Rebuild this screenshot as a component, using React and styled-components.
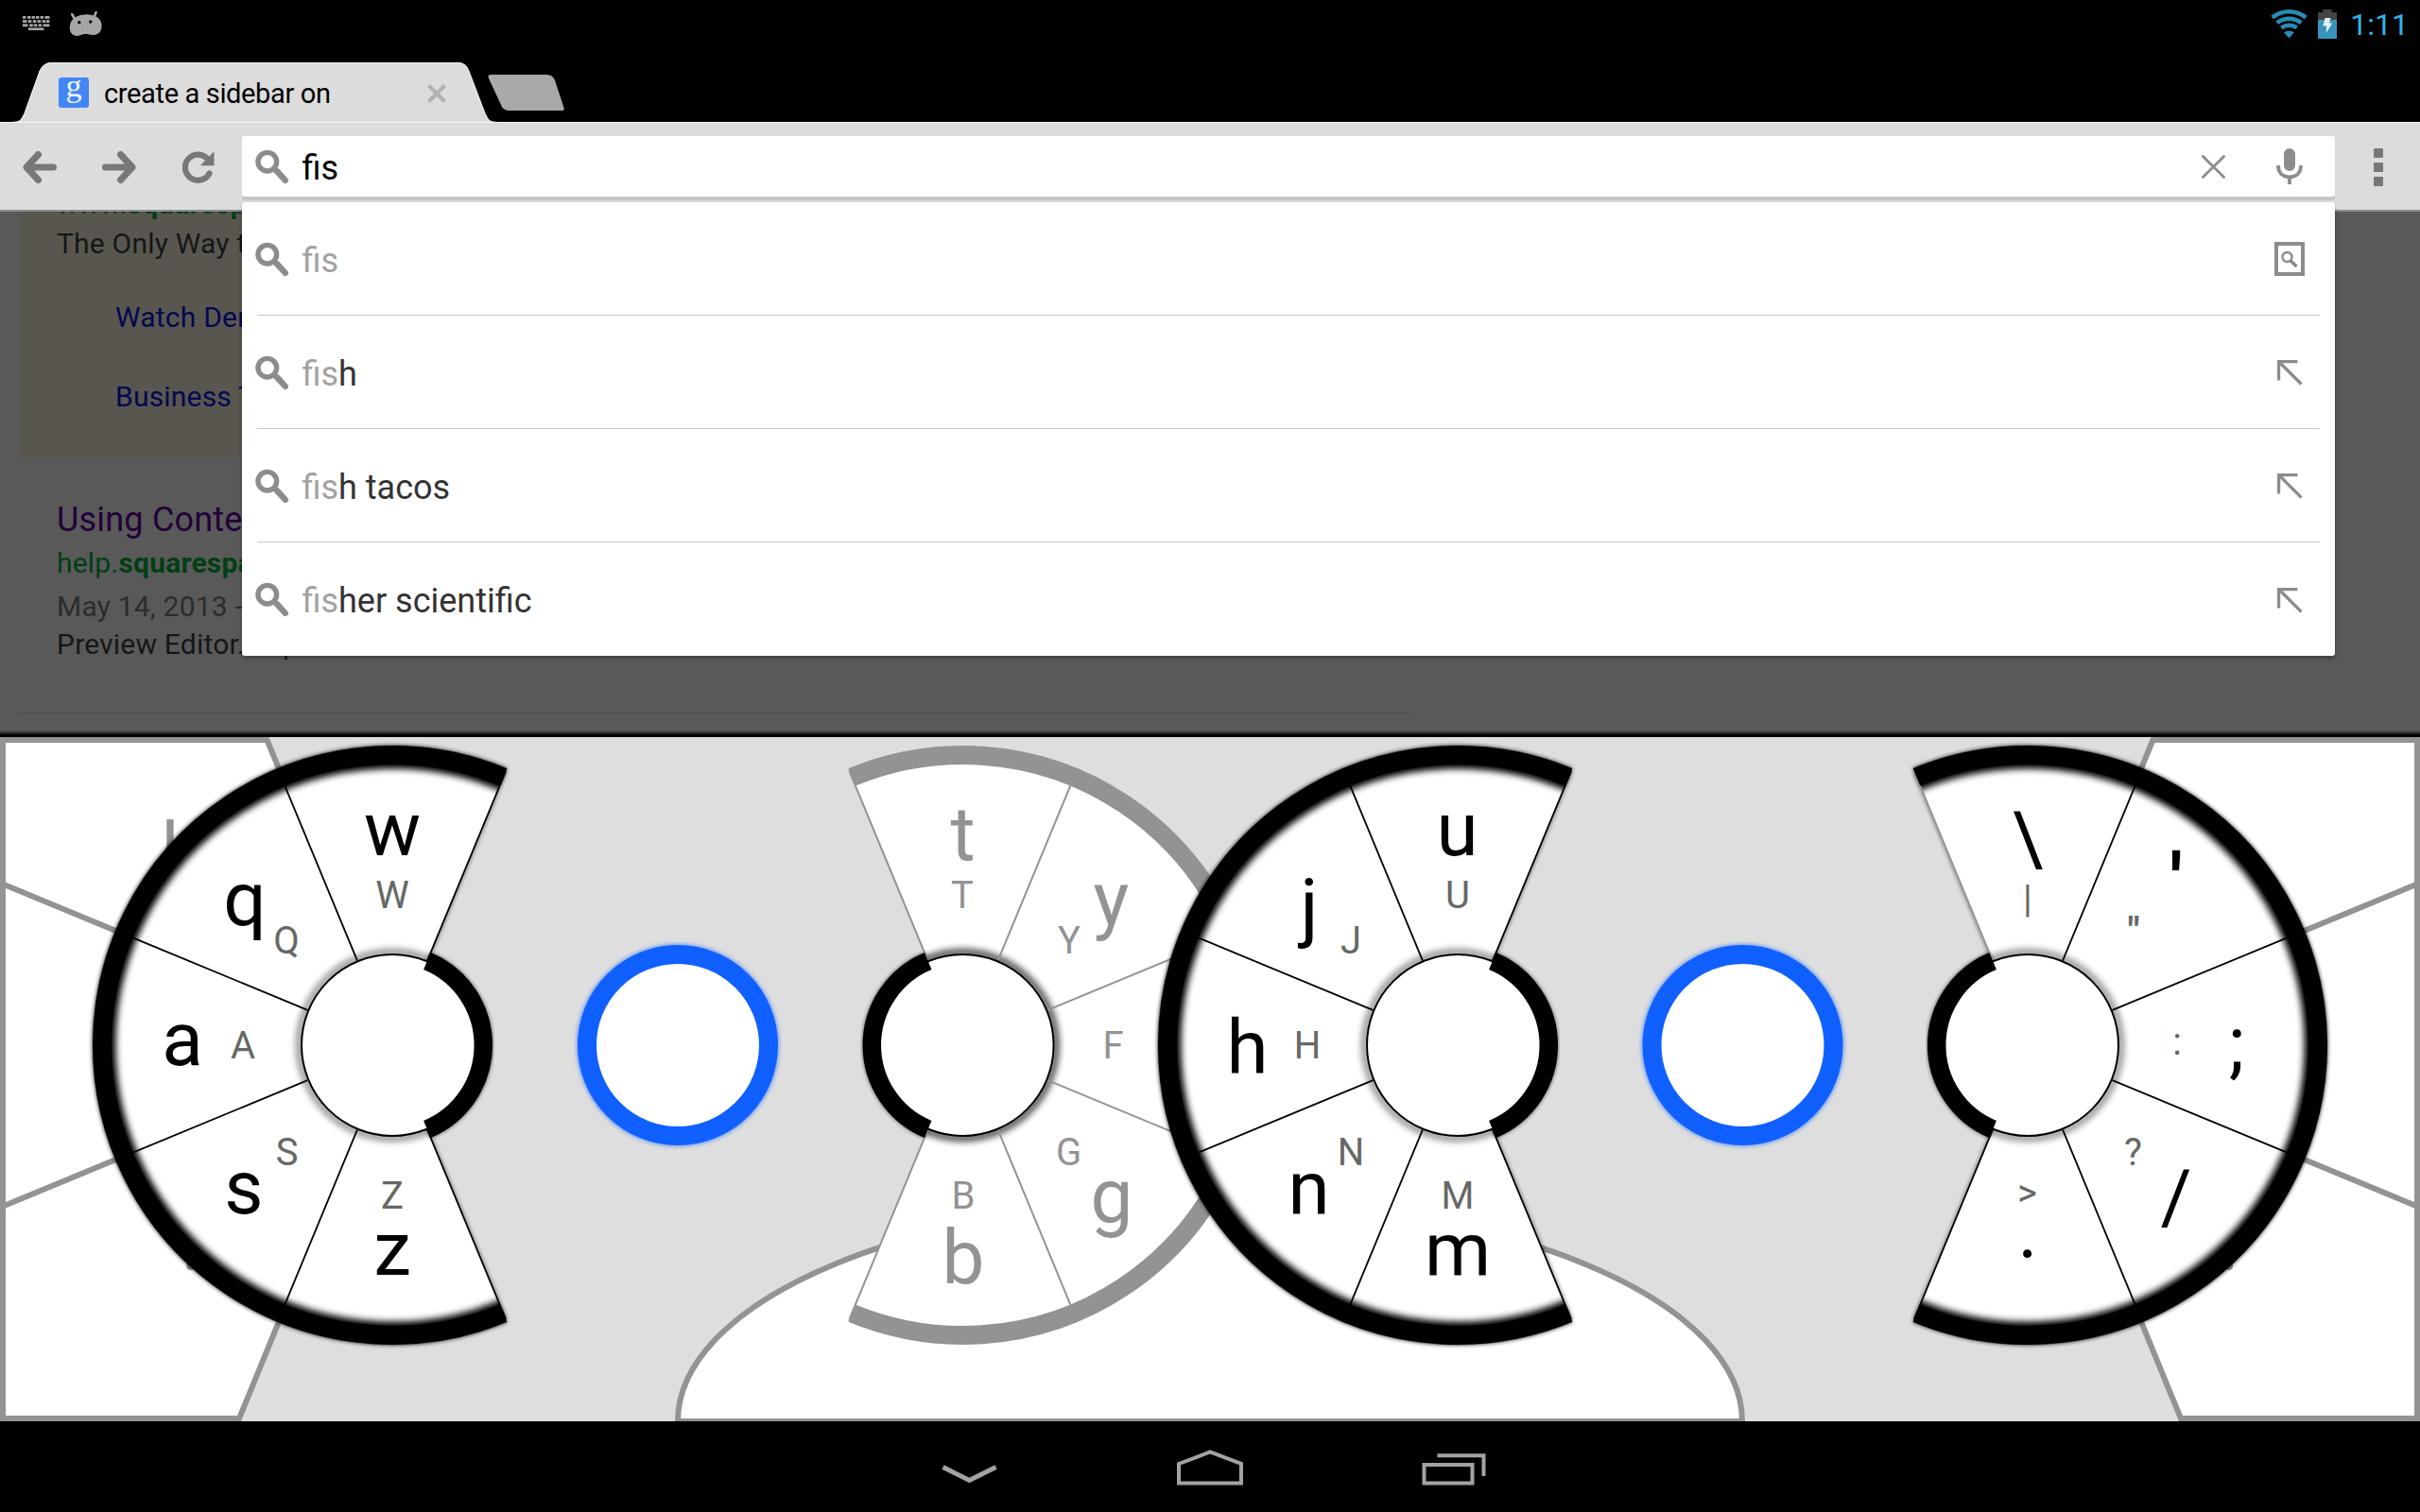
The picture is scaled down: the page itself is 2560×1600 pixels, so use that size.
import React from "react";
import styled, { createGlobalStyle } from "styled-components";

const GlobalStyle = createGlobalStyle`
  html, body { margin: 0; padding: 0; background: #000; }
  * { box-sizing: border-box; }
  body { font-family: Roboto, "Liberation Sans", sans-serif; overflow: hidden; }
  svg { display: block; flex: none; overflow: visible; }
`;

const Screen = styled.div`
  width: 2560px;
  height: 1600px;
  display: flex;
  flex-direction: column;
  background: #000;
  overflow: hidden;
`;

const StatusBar = styled.header`
  height: 50px;
  flex: none;
  display: flex;
  justify-content: space-between;
  align-items: center;
  padding: 0 12px 0 24px;
`;

const StatusGroup = styled.div`
  display: flex;
  align-items: center;
  gap: ${(p) => p.$gap}px;
`;

const Clock = styled.span`
  font-size: 32px;
  line-height: 50px;
  color: #33b5e5;
  padding: 2px 0 0 3px;
`;

const TabStrip = styled.div`
  height: 79px;
  flex: none;
  display: flex;
  align-items: flex-end;
  padding-left: 18px;
`;

const Tab = styled.div`
  width: 506px;
  height: 63px;
  display: flex;
  align-items: center;
  padding: 0 52px 3px 44px;
  position: relative;
`;

const TabShape = styled.svg`
  position: absolute;
  left: 0;
  top: 0;
`;

const Favicon = styled.span`
  position: relative;
  width: 32px;
  height: 32px;
  margin-top: 4px;
  border-radius: 3px;
  background: #4285f4;
  color: #f2f6ff;
  font: 34px/17px "Liberation Serif", serif;
  text-align: center;
`;

const TabTitle = styled.span`
  position: relative;
  flex: 1;
  margin-left: 16px;
  font-size: 29px;
  letter-spacing: -0.35px;
  line-height: 40px;
  padding-top: 5px;
  color: #000;
  white-space: nowrap;
`;

const TabClose = styled.svg`
  position: relative;
  top: 3px;
`;

const Toolbar = styled.div`
  position: relative;
  z-index: 2;
  height: 95px;
  flex: none;
  display: flex;
  align-items: center;
  background: #dcdcdc;
  border-top: 1px solid #f4f4f4;
  border-bottom: 2px solid #8c8c8c;
`;

const NavButtons = styled.div`
  width: 256px;
  display: flex;
  align-items: center;
  padding: 2px 0 0 24px;
  gap: 48px;
`;

const OmniWrap = styled.div`
  position: relative;
  width: 2214px;
  height: 64px;
`;

const Omnibox = styled.div`
  height: 64px;
  display: flex;
  align-items: center;
  background: #fff;
  border-radius: 3px;
  box-shadow: 0 4px 1px #c6c6c6;
  padding: 0 34px 0 14px;
`;

const Query = styled.span`
  flex: 1;
  margin-left: 13.5px;
  padding-top: 4px;
  font-size: 36px;
  line-height: 42px;
  color: #000;
`;

const BoxActions = styled.div`
  display: flex;
  align-items: center;
  gap: 54px;
`;

const Suggestions = styled.ul`
  position: absolute;
  left: 0;
  top: 70px;
  width: 2214px;
  margin: 0;
  padding: 0 16px;
  list-style: none;
  background: #fff;
  border-radius: 3px;
  box-shadow: 0 3px 4px rgba(0, 0, 0, 0.25);
`;

const Suggestion = styled.li`
  height: 120px;
  display: flex;
  align-items: center;
  border-bottom: ${(p) => (p.$last ? "none" : "1px solid #c8c8c8")};
  padding-right: ${(p) => (p.$page ? 16 : 18)}px;
`;

const RowIcon = styled.span`
  margin-left: -2px;
`;

const FillSlot = styled.span`
  padding-top: 2px;
`;

const SuggestionText = styled.span`
  flex: 1;
  margin-left: 13.5px;
  padding-top: 4px;
  font-size: 36px;
  line-height: 42px;
  color: #333;
`;

const Typed = styled.span`
  color: #a2a2a2;
`;

const MenuDots = styled.div`
  flex: 1;
  display: flex;
  flex-direction: column;
  align-items: center;
  gap: 5px;
  padding: 2px 0 0 2px;
`;

const Dot = styled.i`
  width: 10px;
  height: 10px;
  border-radius: 1px;
  background: #777;
`;

const Page = styled.main`
  height: 556px;
  flex: none;
  background: linear-gradient(to bottom, #595959 549px, #000 554px);
  overflow: hidden;
  padding-left: 20px;
`;

const AdBlock = styled.section`
  width: 1473px;
  height: 261px;
  background: #59564f;
  padding-left: 40px;
  display: flow-root;
`;

const Result = styled.section`
  width: 1473px;
  height: 268px;
  padding: 43px 0 0 40px;
`;

const Rule = styled.div`
  width: 1473px;
  height: 2px;
  background: #515151;
`;

const Line = styled.div`
  height: ${(p) => p.$h || 40}px;
  line-height: ${(p) => p.$h || 40}px;
  margin-top: ${(p) => p.$mt || 0}px;
  margin-left: ${(p) => p.$ml || 0}px;
  font-size: ${(p) => p.$size || 30}px;
  letter-spacing: 0.2px;
  color: ${(p) => p.$color};
  white-space: nowrap;
`;

const Keyboard = styled.section`
  height: 724px;
  flex: none;
  background: #dedede;
  overflow: hidden;
`;

const KeyText = styled.text`
  font-family: Roboto, "Liberation Sans", sans-serif;
  font-size: ${(p) => p.$size}px;
  font-weight: ${(p) => (p.$heavy ? 700 : 400)};
  text-anchor: middle;
  fill: ${(p) => p.$color};
`;

const NavBar = styled.nav`
  height: 96px;
  flex: none;
  display: flex;
  align-items: center;
  justify-content: center;
  gap: 190px;
`;

const NavSlot = styled.div`
  width: 70px;
  height: 96px;
  display: flex;
  justify-content: ${(p) => (p.$end ? "flex-end" : "center")};
  align-items: flex-start;
`;

function SearchIcon() {
  return (
    <svg width="36" height="36" viewBox="0 0 36 36" fill="none" stroke="#8c8c8c">
      <circle cx="12.8" cy="13.2" r="9.8" strokeWidth="5.4" />
      <path d="M20 21.5L25 26" strokeWidth="5" />
      <path d="M23.3 23.5L31.8 32.8" strokeWidth="6.4" strokeLinecap="round" />
    </svg>
  );
}

function ArrowIcon({ flip }) {
  return (
    <svg width="36" height="36" viewBox="0 0 36 36" fill="none" stroke="#787878" strokeWidth="7" strokeLinecap="round" strokeLinejoin="round">
      <g transform={flip ? "translate(36 0) scale(-1 1)" : undefined}>
        <path d="M16.5 4.5L4 18L16.5 31.5M5 18H32.5" />
      </g>
    </svg>
  );
}

function ReloadIcon() {
  return (
    <svg width="36" height="36" viewBox="0 0 36 36">
      <path d="M27 8.5A13.6 13.6 0 1 0 29.5 24.5" fill="none" stroke="#787878" strokeWidth="6.2" strokeLinecap="round" />
      <path d="M34.5 1.2V16.2H19.8Z" fill="#787878" />
    </svg>
  );
}

function FillArrow() {
  return (
    <svg width="27" height="27" viewBox="0 0 27 27" fill="none" stroke="#8c8c8c" strokeWidth="3.2">
      <path d="M1.6 21.5V1.6H21.5M2 2L25.5 25.5" />
    </svg>
  );
}

function PageSearchIcon() {
  return (
    <svg width="32" height="36" viewBox="0 0 32 36" fill="none" stroke="#8c8c8c">
      <rect x="2" y="2" width="28" height="32" strokeWidth="4" />
      <circle cx="13.5" cy="16" r="5" strokeWidth="2.4" />
      <path d="M17.2 20L23.5 26" strokeWidth="3.6" />
    </svg>
  );
}

function KeyboardIcon() {
  const rows = [
    [0, [0, 5, 9.6, 14, 18.6, 23.4], 3.4],
    [4.2, [0, 5.8, 10.8, 15.6, 20.6, 25], 3.6],
    [8.4, [0, 7.2, 11.8, 16.6, 21.6], 3.6],
  ];
  return (
    <svg width="29" height="16" viewBox="0 0 29 16" fill="#a6a6a6">
      {rows.map(([y, xs, w], r) =>
        xs.map((x, i) => (
          <rect key={`${r}-${x}`} x={x} y={y} width={i === xs.length - 1 ? 28.4 - x : i === 0 && r ? w + r * 0.9 : w} height="2.8" />
        ))
      )}
      <rect x="6" y="12.4" width="16.4" height="2.6" />
    </svg>
  );
}

function DroidIcon() {
  return (
    <svg width="35" height="27" viewBox="0 0 35 27">
      <path d="M3.2 3L6 8M28.6 1L26.6 6" stroke="#a6a6a6" strokeWidth="2.6" strokeLinecap="round" />
      <path d="M1 15C2 7 9 3.6 17 3.4C26 3 33 6.5 34.4 13C35.4 19.5 32 25 26 25C22.5 25 20 23.6 17 24C13.5 24.2 10.5 26.5 6.8 25.8C2 25 0.2 20 1 15Z" fill="#a6a6a6" />
      <circle cx="10.8" cy="11.7" r="1.7" />
      <circle cx="22.8" cy="11" r="1.7" />
      <path d="M14.6 17h1v1h-1zM19 17h1v1h-1zM14.6 20h1v1h-1zM19 20h1v1h-1z" fill="#8a8a8a" />
    </svg>
  );
}

function WifiIcon() {
  return (
    <svg width="39" height="31" viewBox="0 0 39 31">
      <g fill="none" stroke="#268cb5" strokeWidth="4.6">
        <path d="M1.7 8.6A28 28 0 0 1 37.3 8.6" />
        <path d="M6.8 14.2A20.5 20.5 0 0 1 32.2 14.2" />
        <path d="M11.4 19.4A13.5 13.5 0 0 1 27.6 19.4" />
      </g>
      <path d="M14 24.2Q19.5 20.6 25 24.2L19.5 30.4Z" fill="#268cb5" />
    </svg>
  );
}

function BatteryIcon() {
  return (
    <svg width="20" height="31" viewBox="0 0 20 31">
      <path d="M0 3H5.4V0H14.6V3H20V11H0Z" fill="#444" />
      <path d="M0 11H20V31H0Z" fill="#3893b8" />
      <path d="M7.5 9H13.6L12 14.4H15.4L8.6 25L9.2 17.4H5.4Z" fill="#e4eef2" />
    </svg>
  );
}

const CY = 326;
const rad = (deg) => (deg * Math.PI) / 180;
const pt = (cx, r, deg) => `${(cx + r * Math.cos(rad(deg))).toFixed(2)} ${(CY + r * Math.sin(rad(deg))).toFixed(2)}`;
const arc = (cx, r, from, to) =>
  `M${pt(cx, r, from)}A${r} ${r} 0 ${Math.abs(to - from) > 180 ? 1 : 0} 1 ${pt(cx, r, to)}`;

const GREY = "#949294";

/* A fan of five keys round a hub; the open side faces right when side is "left". */
function Dial({ cx, side, muted, faintEdge, keys }) {
  const start = side === "left" ? 67.5 : -112.5;
  const end = start + 225;
  const hubFrom = side === "left" ? -67.5 : 112.5;
  const hubTo = hubFrom + 135;
  const clip = `fan-${Math.round(cx)}`;
  const spokes = [0, 1, 2, 3, 4, 5].map((i) => start + i * 45);
  return (
    <g>
      <clipPath id={clip}>
        <path d={`M${cx} ${CY}L${pt(cx, 318, start)}A318 318 0 1 1 ${pt(cx, 318, end)}Z`} />
      </clipPath>
      {!muted && (
        <g filter="url(#glow)" opacity="0.75">
          <path d={arc(cx, 307, start, end)} fill="none" stroke="#000" strokeWidth="21" />
          <path d={`M${pt(cx, 98, start)}L${pt(cx, 312, start)}M${pt(cx, 98, end)}L${pt(cx, 312, end)}`} stroke="#000" strokeWidth="2" />
        </g>
      )}
      <path d={`M${cx} ${CY}L${pt(cx, 316, start)}A316 316 0 1 1 ${pt(cx, 316, end)}Z`} fill="#fff" />
      <g clipPath={`url(#${clip})`}>
        {!muted && <path d={arc(cx, 303, start - 2, end + 2)} fill="none" stroke="#000" strokeWidth="21" filter="url(#soft)" />}
        <circle cx={cx} cy={CY} r="98.5" fill="none" stroke="#000" strokeWidth="7" opacity={muted ? 0.75 : 0.45} filter="url(#soft)" />
      </g>
      <path d={arc(cx, 96, hubFrom, hubTo)} fill="none" stroke="#000" strokeWidth="20" opacity="0.7" filter="url(#glow)" />
      {spokes.map((a, i) => (
        <path
          key={a}
          d={`M${pt(cx, 97, a)}L${pt(cx, 314, a)}`}
          stroke={muted || (faintEdge && i === 0) ? GREY : "#000"}
          strokeWidth={muted ? 2 : 1.8}
        />
      ))}
      <path d={arc(cx, 307, start, end)} fill="none" stroke={muted ? GREY : "#000"} strokeWidth="20" />
      <circle cx={cx} cy={CY} r="96" fill="#fff" stroke="#000" strokeWidth="2" />
      <path d={arc(cx, 96.3, hubFrom, hubTo)} fill="none" stroke="#000" strokeWidth="19.5" />
      {keys.map(([ch, x, y, alt, ax, ay]) => (
        <React.Fragment key={ch || alt}>
          {ch && <KeyText x={x} y={y} $size={80} $heavy={ch === "'"} $color={muted ? GREY : "#000"}>{ch}</KeyText>}
          <KeyText x={ax} y={ay} $size={40} $heavy={alt === "\""} $color={muted ? GREY : "#666866"}>{alt}</KeyText>
        </React.Fragment>
      ))}
    </g>
  );
}

function BlueHub({ cx }) {
  return (
    <g>
      <circle cx={cx} cy={CY} r="98" fill="none" stroke="#1060ff" strokeWidth="18" opacity="0.6" filter="url(#glow)" />
      <circle cx={cx} cy={CY} r="96" fill="#fff" stroke="#1060ff" strokeWidth="20" />
    </g>
  );
}

const DIALS = [
  {
    cx: 1018.6, side: "right", muted: true,
    keys: [
      ["t", 1018.5, 130, "T", 1018, 181],
      ["y", 1175.5, 199, "Y", 1131, 228.5],
      [null, 0, 0, "F", 1177.5, 340],
      ["g", 1176, 513, "G", 1130.5, 453],
      ["b", 1019, 578, "B", 1019, 499],
    ],
  },
  {
    cx: 415, side: "left",
    keys: [
      ["z", 415, 569, "Z", 415, 499],
      ["s", 258, 504, "S", 303.5, 453],
      ["a", 193, 347, "A", 257, 340],
      ["q", 259, 198.5, "Q", 303, 228.5],
      ["w", 415, 125, "W", 415, 181],
    ],
  },
  {
    cx: 1542, side: "left",
    keys: [
      ["m", 1542, 570, "M", 1542, 499],
      ["n", 1384.5, 505, "N", 1429, 452.5],
      ["h", 1319.5, 356, "H", 1383, 340],
      ["j", 1385, 207, "J", 1429, 228.5],
      ["u", 1541.5, 125, "U", 1542, 181],
    ],
  },
  {
    cx: 2145, side: "right", faintEdge: true,
    keys: [
      ["\\", 2145, 135, "|", 2145, 184.5],
      ["'", 2302, 180, "\"", 2257, 219],
      [";", 2366, 352, ":", 2303, 336],
      ["/", 2302, 513.5, "?", 2256.5, 453],
      [".", 2145, 551, ">", 2144.5, 496],
    ],
  },
];

function CornerKeys({ mirrored }) {
  return (
    <g transform={mirrored ? "translate(2560 0) scale(-1 1)" : undefined} fill="#fff" stroke={GREY} strokeWidth="6">
      <path d="M3 3H282.5L415 326L253 721H3Z" />
      <path d="M3 155.5L415 326L3 496.500" fill="none" />
    </g>
  );
}

function RadialKeys() {
  return (
    <svg width="2560" height="724" viewBox="0 0 2560 724">
      <defs>
        <filter id="glow" x="-20%" y="-20%" width="140%" height="140%">
          <feGaussianBlur stdDeviation="2" />
        </filter>
        <filter id="soft" x="-20%" y="-20%" width="140%" height="140%">
          <feGaussianBlur stdDeviation="3.5" />
        </filter>
      </defs>
      <CornerKeys />
      <CornerKeys mirrored />
      <KeyText x="180" y="147" $size={80} $color={GREY}>l</KeyText>
      <KeyText x="202" y="564" $size={80} $color={GREY}>.</KeyText>
      <KeyText x="2358" y="564" $size={80} $color={GREY}>.</KeyText>
      <ellipse cx="1280" cy="724" rx="563" ry="234.5" fill="#fff" stroke={GREY} strokeWidth="6" />
      <path d="M717 722.5H1843" stroke={GREY} strokeWidth="3" />
      <BlueHub cx={717} />
      <BlueHub cx={1843.500} />
      {DIALS.map((d) => <Dial key={d.cx} {...d} />)}
    </svg>
  );
}

const SUGGESTIONS = ["", "h", "h tacos", "her scientific"];

export default function App() {
  return (
    <Screen>
      <GlobalStyle />
      <StatusBar>
        <StatusGroup $gap={20}>
          <KeyboardIcon />
          <DroidIcon />
        </StatusGroup>
        <StatusGroup $gap={11}>
          <WifiIcon />
          <BatteryIcon />
          <Clock>1:11</Clock>
        </StatusGroup>
      </StatusBar>

      <TabStrip>
        <Tab>
          <TabShape width="600" height="63" viewBox="0 0 600 63">
            <path d="M-6 63.500C3 63.500 4.500 62 8 54L24 9Q28 0 37 0H466Q475 0 478 9L495 54C498.500 62 500 63.500 509 63.500Z" fill="#dcdcdc" />
            <path d="M-6 63.500C3 63.500 4.500 62 8 54L24 9.500Q28 0.700 37 0.700H466Q475 0.700 478 9.500L495 54C498.500 62 500 63.500 509 63.500" fill="none" stroke="#ececec" strokeWidth="1.200" />
            <path d="M501 13H560Q567 13 569 19L578.500 48Q579.500 51 576.500 51H521Q514 51 512 45L499 17Q497.500 13 501 13Z" fill="#a9a9a9" />
          </TabShape>
          <Favicon>g</Favicon>
          <TabTitle>create a sidebar on</TabTitle>
          <TabClose width="20" height="20" viewBox="0 0 20 20" stroke="#b2b2b2" strokeWidth="4.2">
            <path d="M1.5 1.5L18.5 18.5M18.5 1.5L1.5 18.5" />
          </TabClose>
        </Tab>
      </TabStrip>

      <Toolbar>
        <NavButtons>
          <ArrowIcon />
          <ArrowIcon flip />
          <ReloadIcon />
        </NavButtons>
        <OmniWrap>
          <Omnibox>
            <SearchIcon />
            <Query>fis</Query>
            <BoxActions>
              <svg width="25" height="25" viewBox="0 0 25 25" stroke="#8c8c8c" strokeWidth="2.8" strokeLinecap="round">
                <path d="M1.4 1.4L23.6 23.6M23.6 1.4L1.4 23.6" />
              </svg>
              <svg width="28" height="38" viewBox="0 0 28 38">
                <rect x="8" y="0" width="12" height="24" rx="6" fill="#8c8c8c" />
                <path d="M2 18C2 26 7 30.3 14 30.3S26 26 26 18M14 30V38" fill="none" stroke="#8c8c8c" strokeWidth="3.8" />
              </svg>
            </BoxActions>
          </Omnibox>
          <Suggestions>
            {SUGGESTIONS.map((rest, i) => (
              <Suggestion key={rest} $page={i === 0} $last={i === SUGGESTIONS.length - 1}>
                <RowIcon><SearchIcon /></RowIcon>
                <SuggestionText><Typed>fis</Typed>{rest}</SuggestionText>
                {i === 0 ? <PageSearchIcon /> : <FillSlot><FillArrow /></FillSlot>}
              </Suggestion>
            ))}
          </Suggestions>
        </OmniWrap>
        <MenuDots>
          <Dot />
          <Dot />
          <Dot />
        </MenuDots>
      </Toolbar>

      <Page>
        <AdBlock>
          <Line $mt={-28} $color="#003f14">www.<b>squarespace</b>.com/</Line>
          <Line $mt={2} $color="#161616">The Only Way to</Line>
          <Line $mt={38} $ml={62} $color="#020850">Watch Demo</Line>
          <Line $mt={44} $ml={62} $color="#020850">Business Tools</Line>
        </AdBlock>
        <Result>
          <Line $h={44} $size={36} $color="#240038">Using Content</Line>
          <Line $mt={4} $color="#003f14">help.<b>squarespace</b>.com</Line>
          <Line $mt={6} $color="#2c2c2c">May 14, 2013 - </Line>
          <Line $color="#161616">Preview Editor. Exp</Line>
        </Result>
        <Rule />
      </Page>

      <Keyboard>
        <RadialKeys />
      </Keyboard>

      <NavBar>
        <NavSlot $end>
          <svg width="58" height="96" viewBox="0 0 58 96">
            <path d="M0.500 48.500L28.500 62.500L56.500 48.500" fill="none" stroke="#a3a3a3" strokeWidth="5" />
          </svg>
        </NavSlot>
        <NavSlot>
          <svg width="70" height="96" viewBox="0 0 70 96">
            <path d="M2 45L35 32.500L68 45V65.500H2Z" fill="none" stroke="#a3a3a3" strokeWidth="4" />
          </svg>
        </NavSlot>
        <NavSlot>
          <svg width="70" height="96" viewBox="0 0 70 96">
            <path d="M1.500 46H52.500V65.500H1.500ZM15.500 36.300H64.500V58" fill="none" stroke="#a3a3a3" strokeWidth="4" />
          </svg>
        </NavSlot>
      </NavBar>
    </Screen>
  );
}
